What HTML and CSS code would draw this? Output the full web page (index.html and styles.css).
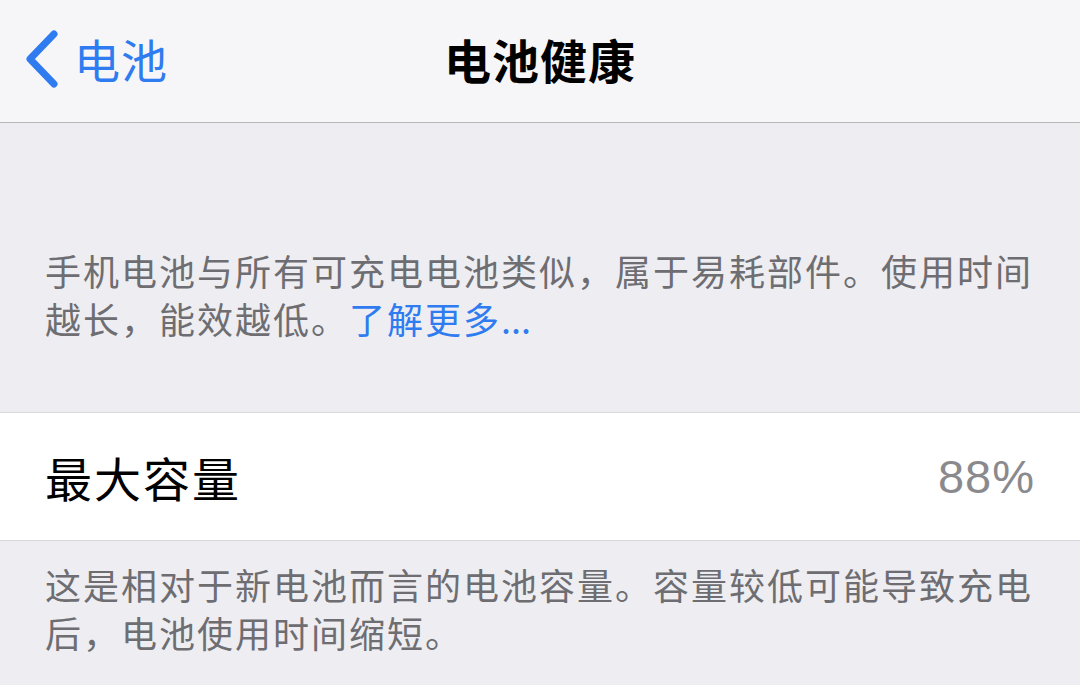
FILE: index.html
```html
<!DOCTYPE html>
<html lang="zh-CN">
<head>
    <meta charset="UTF-8">
    <meta name="viewport" content="width=device-width, initial-scale=1.0">
    <title>电池健康</title>
    <link rel="stylesheet" href="styles.css">
</head>
<body>
    <div class="navbar">
        <a class="back" href="#">
            <svg class="chevron" width="40" height="60" viewBox="0 0 40 60">
                <path d="M32 5 L8 30 L32 55" fill="none" stroke="#2f7bf0" stroke-width="7" stroke-linecap="round" stroke-linejoin="round"/>
            </svg>
            <span>电池</span>
        </a>
        <h1 class="title">电池健康</h1>
    </div>

    <div class="intro">
        <p>手机电池与所有可充电电池类似，属于易耗部件。使用时间<br>越长，能效越低。<a href="#" class="link">了解更多<span class="dots">...</span></a></p>
    </div>

    <div class="row">
        <span class="label">最大容量</span>
        <span class="value">88%</span>
    </div>

    <div class="footer">
        <p>这是相对于新电池而言的电池容量。容量较低可能导致充电<br>后，电池使用时间缩短。</p>
    </div>
</body>
</html>
```

FILE: styles.css
```css
body { margin: 0; background-color: #eeedf1; font-family: "Noto Sans CJK SC", "Noto Sans", sans-serif; overflow: hidden; }
.navbar { height: 122px; border-bottom: 1px solid #b8b8bc; background-color: #f6f6f8; display: flex; align-items: center; justify-content: center; position: relative; }
.back { position: absolute; left: 22px; top: 29px; display: flex; align-items: center; gap: 12px; color: #2f7bf0; text-decoration: none; font-size: 46px; letter-spacing: 1px; }
.back span { line-height: 60px; margin-top: -2px; }
.title { margin: 0; font-size: 47px; font-weight: bold; color: #000; letter-spacing: 1px; margin-top: -6px; }
.intro { padding: 123px 45px 70px; }
.intro p, .footer p { margin: 0; font-size: 36px; line-height: 48px; letter-spacing: 2px; color: #6d6d72; }
.link { color: #2f7bf0; text-decoration: none; }
.dots { letter-spacing: 0; }
.row { height: 127px; background-color: #fff; border-top: 1px solid #d8d8dc; border-bottom: 1px solid #d8d8dc; display: flex; align-items: center; justify-content: space-between; padding: 0 45px; }
.label { font-size: 47px; letter-spacing: 2px; color: #000; }
.value { font-family: "Liberation Sans", sans-serif; font-size: 47px; color: #8a8a8e; letter-spacing: 1px; }
.footer { padding: 19px 45px 0; }
```
